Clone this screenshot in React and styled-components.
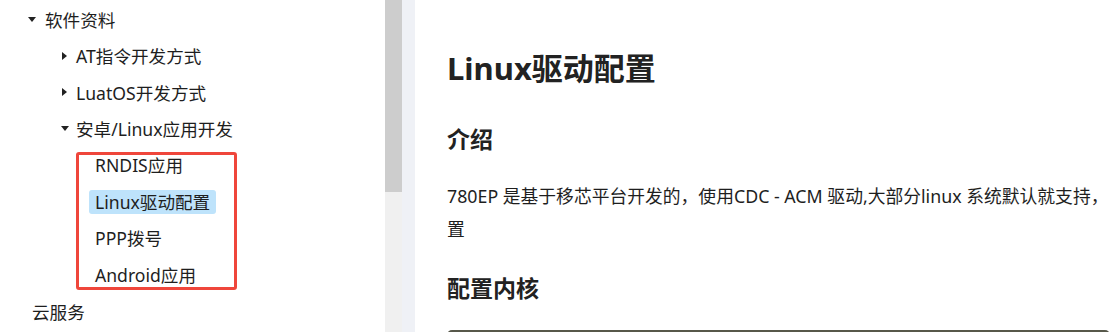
import React from "react";
import styled, { createGlobalStyle } from "styled-components";

const Global = createGlobalStyle`
  html, body { margin: 0; padding: 0; background: #fff; }
  body {
    font-family: "Noto Sans", "Noto Sans CJK SC", sans-serif;
    color: #222;
  }
`;

const Page = styled.div`
  display: flex;
  height: 332px;
  width: 1110px;
  overflow: hidden;
`;

const Sidebar = styled.nav`
  width: 385px;
  flex: none;
  background: #fff;
  overflow: hidden;
`;

const NavList = styled.div`
  display: flex;
  flex-direction: column;
  padding-top: 1px;
`;

const Row = styled.div`
  display: flex;
  align-items: center;
  height: 36.5px;
  padding-left: ${(p) => p.$indent}px;
  font-size: 17.6px;
  color: #1e1e1e;
  white-space: nowrap;
`;

const Caret = styled.span`
  flex: none;
  width: ${(p) => p.$w}px;
  display: flex;
  align-items: center;
  padding-left: ${(p) => (p.$open ? 0 : 1)}px;
  box-sizing: border-box;
  &::before {
    content: "";
    display: block;
    width: 0;
    height: 0;
    ${(p) =>
      p.$open
        ? `border-left: 4px solid transparent; border-right: 4px solid transparent; border-top: 5px solid #222;`
        : `border-top: 4px solid transparent; border-bottom: 4px solid transparent; border-left: 5px solid #222;`}
  }
`;

const Label = styled.span`
  display: inline-block;
  padding: 0 ${(p) => (p.$pad ? 6 : 0)}px;
  line-height: 24px;
  height: 24px;
  border-radius: 3px;
  background: ${(p) => (p.$active ? "#bee3fb" : "transparent")};
`;

const Group = styled.div`
  position: relative;
  display: flex;
  flex-direction: column;
`;

const Annotation = styled.div`
  position: absolute;
  left: 76px;
  top: 5px;
  width: 161px;
  height: 138px;
  box-sizing: border-box;
  border: 3px solid #ef463b;
  border-radius: 3px;
  pointer-events: none;
`;

const ScrollTrack = styled.div`
  width: 17px;
  flex: none;
  background: #f0f0f0;
  display: flex;
  flex-direction: column;
`;

const ScrollThumb = styled.div`
  height: 192px;
  background: #cdcdcd;
`;

const Gutter = styled.div`
  width: 13px;
  flex: none;
  background: #eff1f6;
`;

const Content = styled.main`
  flex: 1;
  min-width: 0;
  padding-left: 32px;
  overflow: hidden;
  display: flex;
  flex-direction: column;
`;

const Title = styled.h1`
  margin: 46px 0 0;
  font-size: 31px;
  line-height: 44px;
  font-weight: 700;
  color: #222;
  white-space: nowrap;
`;

const SubTitle = styled.h2`
  margin: ${(p) => p.$mt}px 0 0;
  font-size: 23px;
  line-height: 32px;
  font-weight: 700;
  color: #222;
  white-space: nowrap;
`;

const Para = styled.p`
  margin: 24.5px 0 0;
  font-size: 17.8px;
  line-height: 33px;
  color: #1e1e1e;
  white-space: nowrap;
`;

const DarkBlock = styled.div`
  margin-top: 25.5px;
  height: 40px;
  flex: none;
  background: #57584a;
  border-radius: 5px;
`;

const subItems = ["RNDIS应用", "Linux驱动配置", "PPP拨号", "Android应用"];

export default function App() {
  return (
    <>
      <Global />
      <Page>
        <Sidebar>
          <NavList>
            <Row $indent={28}>
              <Caret $w={17} $open />
              <span>软件资料</span>
            </Row>
            <Row $indent={61}>
              <Caret $w={15} />
              <span>AT指令开发方式</span>
            </Row>
            <Row $indent={61}>
              <Caret $w={15} />
              <span>LuatOS开发方式</span>
            </Row>
            <Row $indent={61}>
              <Caret $w={15} $open />
              <span>安卓/Linux应用开发</span>
            </Row>
            <Group>
              {subItems.map((t) => (
                <Row key={t} $indent={89}>
                  <Label $pad $active={t === "Linux驱动配置"}>
                    {t}
                  </Label>
                </Row>
              ))}
              <Annotation />
            </Group>
            <Row $indent={32}>
              <span>云服务</span>
            </Row>
          </NavList>
        </Sidebar>
        <ScrollTrack>
          <ScrollThumb />
        </ScrollTrack>
        <Gutter />
        <Content>
          <Title>Linux驱动配置</Title>
          <SubTitle $mt={33}>介绍</SubTitle>
          <Para>
            780EP 是基于移芯平台开发的，使用CDC - ACM 驱动,大部分linux 系统默认就支持，
            <br />置
          </Para>
          <SubTitle $mt={26.5}>配置内核</SubTitle>
          <DarkBlock />
        </Content>
      </Page>
    </>
  );
}
